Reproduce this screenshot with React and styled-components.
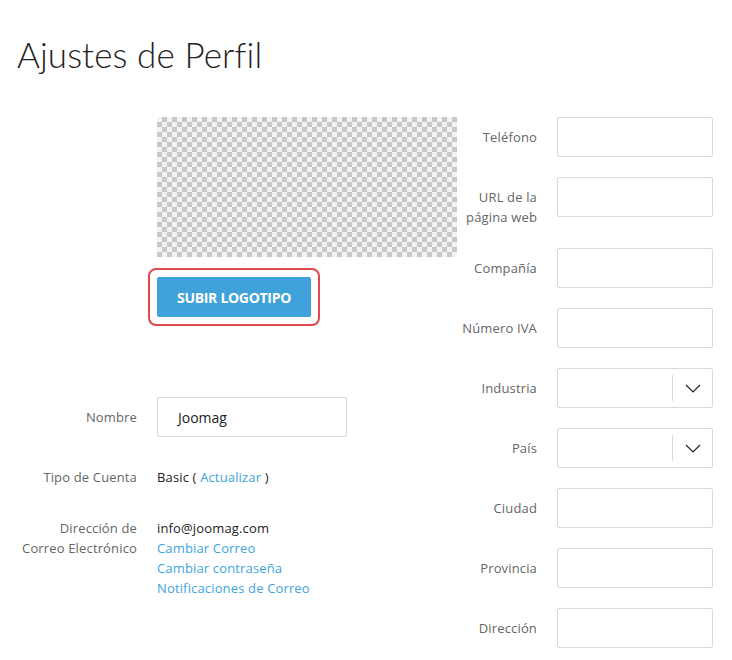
import React from 'react';
import styled, { createGlobalStyle } from 'styled-components';

const Global = createGlobalStyle`
  html, body { margin: 0; padding: 0; background: #fff; }
  body { font-family: "Open Sans", "Liberation Sans", sans-serif; -webkit-font-smoothing: antialiased; }
  * { box-sizing: border-box; }
`;

const Page = styled.div`
  width: 732px;
  padding: 30px 0 0 17px;
`;

const Title = styled.h1`
  margin: 0;
  font-family: Lato, "Open Sans", sans-serif;
  font-weight: 300;
  font-size: 35px;
  line-height: 48px;
  color: #222;
  letter-spacing: 0.1px;
  font-variant-ligatures: none;
`;

const Columns = styled.div`
  display: flex;
  margin-top: 39px;
`;

const LeftColumn = styled.div`
  width: 440px;
  display: flex;
  flex-direction: column;
`;

const RightColumn = styled.div`
  display: flex;
  flex-direction: column;
`;

const LeftRow = styled.div`
  display: grid;
  grid-template-columns: 120px 1fr;
  column-gap: 20px;
  align-items: ${p => p.$align || 'start'};
  margin-top: ${p => p.$mt || 0}px;
`;

const Label = styled.div`
  text-align: right;
  font-size: 13px;
  letter-spacing: 0.15px;
  line-height: 20px;
  color: #666;
  padding-top: ${p => p.$pt || 0}px;
`;

const LogoBox = styled.div`
  width: 300px;
  height: 140px;
  background-color: #f2f2f2;
  background-image:
    linear-gradient(45deg, #c8c8c8 25%, transparent 25%, transparent 75%, #c8c8c8 75%),
    linear-gradient(45deg, #c8c8c8 25%, transparent 25%, transparent 75%, #c8c8c8 75%);
  background-size: 10px 10px;
  background-position: 0 0, 5px 5px;
`;

const ButtonWrap = styled.div`
  position: relative;
  justify-self: start;
`;

const FocusRing = styled.div`
  position: absolute;
  left: -9px;
  top: -9px;
  right: -9px;
  bottom: -9px;
  border: 2px solid #e0484d;
  border-radius: 8px;
  pointer-events: none;
`;

const UploadButton = styled.button`
  display: block;
  width: 154px;
  height: 40px;
  border: none;
  border-radius: 2px;
  background: #3fa2db;
  color: #fff;
  font-family: "Open Sans", sans-serif;
  font-weight: 700;
  font-size: 14px;
  letter-spacing: -0.3px;
  text-transform: uppercase;
  padding: 0;
`;

const TextInput = styled.div`
  width: ${p => p.$w || 156}px;
  height: 40px;
  border: 1px solid #d9d9d9;
  border-radius: 2px;
  display: flex;
  align-items: center;
  padding-left: 20px;
  font-size: 14px;
  color: #222;
  background: #fff;
`;

const Value = styled.div`
  font-size: 13px;
  letter-spacing: 0.15px;
  line-height: 20px;
  color: #222;
`;

const Link = styled.a`
  display: ${p => (p.$block ? 'block' : 'inline')};
  color: #3ca4dd;
  text-decoration: none;
  font-size: 13px;
  letter-spacing: 0.15px;
  line-height: 20px;
`;

const Field = styled.div`
  display: grid;
  grid-template-columns: 80px 156px;
  column-gap: 20px;
  align-items: ${p => p.$align || 'center'};
  margin-bottom: ${p => p.$mb || 20}px;
`;

const SelectBox = styled.div`
  width: 156px;
  height: 40px;
  border: 1px solid #d9d9d9;
  border-radius: 2px;
  display: flex;
  justify-content: flex-end;
  align-items: center;
`;

const SelectArrow = styled.div`
  width: 40px;
  height: 26px;
  border-left: 1px solid #d9d9d9;
  display: flex;
  align-items: center;
  justify-content: center;
`;

const Chevron = () => (
  <svg width="16" height="9" viewBox="0 0 16 9">
    <polyline points="1,1 8,8 15,1" fill="none" stroke="#222" strokeWidth="1.2" />
  </svg>
);

const Select = () => (
  <SelectBox>
    <SelectArrow><Chevron /></SelectArrow>
  </SelectBox>
);

export default function App() {
  return (
    <Page>
      <Global />
      <Title>Ajustes de Perfil</Title>
      <Columns>
        <LeftColumn>
          <LeftRow>
            <div />
            <LogoBox />
          </LeftRow>
          <LeftRow $mt={20}>
            <div />
            <ButtonWrap>
              <FocusRing />
              <UploadButton>Subir logotipo</UploadButton>
            </ButtonWrap>
          </LeftRow>
          <LeftRow $mt={80} $align="center">
            <Label>Nombre</Label>
            <TextInput $w={190}>Joomag</TextInput>
          </LeftRow>
          <LeftRow $mt={30}>
            <Label>Tipo de Cuenta</Label>
            <Value>Basic ( <Link href="#">Actualizar</Link> )</Value>
          </LeftRow>
          <LeftRow $mt={31}>
            <Label>Dirección de<br />Correo Electrónico</Label>
            <div>
              <Value>info@joomag.com</Value>
              <Link $block href="#">Cambiar Correo</Link>
              <Link $block href="#">Cambiar contraseña</Link>
              <Link $block href="#">Notificaciones de Correo</Link>
            </div>
          </LeftRow>
        </LeftColumn>
        <RightColumn>
          <Field>
            <Label>Teléfono</Label>
            <TextInput />
          </Field>
          <Field $align="start" $mb={21}>
            <Label $pt={10}>URL de la<br />página web</Label>
            <TextInput />
          </Field>
          <Field>
            <Label>Compañía</Label>
            <TextInput />
          </Field>
          <Field>
            <Label>Número IVA</Label>
            <TextInput />
          </Field>
          <Field>
            <Label>Industria</Label>
            <Select />
          </Field>
          <Field>
            <Label>País</Label>
            <Select />
          </Field>
          <Field>
            <Label>Ciudad</Label>
            <TextInput />
          </Field>
          <Field>
            <Label>Provincia</Label>
            <TextInput />
          </Field>
          <Field>
            <Label>Dirección</Label>
            <TextInput />
          </Field>
        </RightColumn>
      </Columns>
    </Page>
  );
}
